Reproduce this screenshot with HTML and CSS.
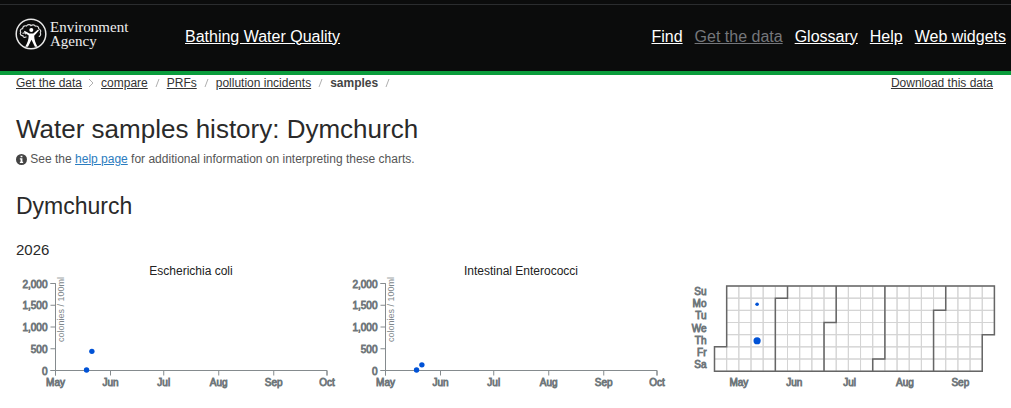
FILE: index.html
```
<!DOCTYPE html>
<html lang="en">
<head>
  <meta charset="UTF-8">
  <meta name="viewport" content="width=device-width, initial-scale=1.0">
  <title>Water samples history: Dymchurch</title>
  <link rel="stylesheet" href="styles.css">
</head>
<body>

  <header class="site-header">
    <a class="logo" href="#">
      <svg class="logo-mark" viewBox="0 0 32 32" aria-hidden="true">
        <circle cx="16" cy="16" r="14.8" fill="none" stroke="#e8e8e8" stroke-width="1.5"/>
        <!-- tree canopy -->
        <path d="M11 19c-1.500.8-3.200.2-3.200-1.400-2 .2-3.200-1.600-2.100-3.200-1-1.900.1-3.700 1.900-3.800.2-2.400 2.200-3.300 3.900-2.600C12.500 6.400 15 6 16 7.600c1.400-1.300 3.500-1 4.200.5 2-.5 3.700.8 3.500 2.600 2 .8 2.500 2.700 1.500 4.100.9 1.500.4 3-.9 3.600M8 15.300c1.200-.7 2.300-.3 2.800.6" fill="none" stroke="#ddd" stroke-width="1.200" stroke-linecap="round"/>
        <!-- figure -->
        <circle cx="16.300" cy="12" r="2" fill="#fff"/>
        <path d="M9.500 12.800l5 2.700h3.800l4.800-4 .9 1-4.800 5.200c0 3.500 1.300 7.500 3.300 11h-2.600l-3.400-7-3.500 7h-2.800c2.300-3.800 3.500-7.500 3.500-11.300l-4.700-3.400z" fill="#fff"/>
      </svg>
      <span class="logo-text">Environment<br>Agency</span>
    </a>
    <a class="service-name" href="#">Bathing Water Quality</a>
    <nav class="main-nav">
      <a href="#">Find</a>
      <a class="current" href="#">Get the data</a>
      <a href="#">Glossary</a>
      <a href="#">Help</a>
      <a href="#">Web widgets</a>
    </nav>
  </header>

  <main class="content">
    <div class="toolbar">
      <nav class="breadcrumb">
        <a href="#">Get the data</a>
        <svg class="sep" viewBox="0 0 7 10" aria-hidden="true"><path d="M1 1l4 4-4 4"/></svg>
        <a href="#">compare</a>
        <svg class="sep" viewBox="0 0 7 10" aria-hidden="true"><path d="M2 9l3-8"/></svg>
        <a href="#">PRFs</a>
        <svg class="sep" viewBox="0 0 7 10" aria-hidden="true"><path d="M2 9l3-8"/></svg>
        <a href="#">pollution incidents</a>
        <svg class="sep" viewBox="0 0 7 10" aria-hidden="true"><path d="M2 9l3-8"/></svg>
        <strong>samples</strong>
        <svg class="sep" viewBox="0 0 7 10" aria-hidden="true"><path d="M2 9l3-8"/></svg>
      </nav>
      <a class="download" href="#">Download this data</a>
    </div>

    <h1>Water samples history: Dymchurch</h1>
    <p class="hint">
      <svg class="info" viewBox="0 0 12 12" aria-hidden="true">
        <circle cx="6" cy="6" r="6" fill="#444"/>
        <path d="M5 1.800h2v1.700H5zM4.200 4.700H7v3.800h.8v1.300H4.200V8.500H5V6h-.8z" fill="#fff"/>
      </svg>
      See the <a href="#">help page</a> for additional information on interpreting these charts.
    </p>

    <h2>Dymchurch</h2>
    <h3>2026</h3>

    <div class="charts">
      <svg class="chart" id="ecoli" viewBox="0 0 330 140"></svg>
      <svg class="chart" id="entero" viewBox="0 0 330 140"></svg>
      <svg class="chart" id="calendar" viewBox="0 0 330 140"></svg>
    </div>
  </main>

  <script src="charts.js"></script>
</body>
</html>
```
FILE: styles.css
```
* {
  box-sizing: border-box;
}

body {
  margin: 0;
  background: #fff;
  color: #2a2a2a;
  font-family: "Liberation Sans", Arial, sans-serif;
  font-size: 12px;
  line-height: 16px;
}

/* Header */
.site-header {
  display: flex;
  align-items: center;
  height: 75px;
  padding: 0 5px 2px 15px;
  background: #0b0c0c;
  border-top: 4px solid #0b0c0c;
  border-bottom: 4px solid #0a9c3c;
  box-shadow: inset 0 1px 0 #2b2d2f;
}

.site-header a {
  color: #fff;
}

.site-header .logo {
  display: flex;
  align-items: center;
  gap: 3px;
  width: 170px;
  padding-bottom: 5px;
  color: #eee;
  text-decoration: none;
}

.logo-mark {
  width: 32px;
  height: 32px;
}

.logo-text {
  font-family: "Liberation Serif", "Times New Roman", serif;
  font-size: 15px;
  line-height: 14px;
}

.service-name,
.main-nav {
  font-size: 16px;
  line-height: 20px;
}

.main-nav {
  display: flex;
  gap: 12px;
  margin-left: auto;
}

.site-header .current {
  color: #75777b;
}

/* Page */
.content {
  padding: 0 5px 0 16px;
}

.toolbar {
  display: flex;
  justify-content: space-between;
  padding-right: 13px;
}

.breadcrumb {
  display: flex;
  align-items: center;
  gap: 6px;
}

.breadcrumb a,
.download {
  color: #333;
}

.breadcrumb strong {
  color: #444;
}

.sep {
  width: 7px;
  height: 10px;
  fill: none;
  stroke: #b0b0b0;
}

h1,
h2,
h3 {
  margin: 0;
  font-weight: normal;
}

h1 {
  margin-top: 22px;
  font-size: 26px;
  line-height: 32px;
}

.hint {
  margin: 6px 0 0;
  color: #555;
}

.hint a {
  color: #2b7cc0;
}

.info {
  width: 11px;
  height: 11px;
  vertical-align: -2px;
}

h2 {
  margin-top: 25px;
  font-size: 23px;
  line-height: 28px;
}

h3 {
  margin-top: 21px;
  font-size: 15px;
  line-height: 18px;
}

/* Charts */
.charts {
  display: grid;
  grid-template-columns: repeat(3, 1fr);
  margin-top: 1px;
}

.chart {
  display: block;
  width: 100%;
}

.chart-title {
  fill: #222;
  font-size: 12px;
  text-anchor: middle;
}

.label {
  fill: #6f777b;
  stroke: #6f777b;
  stroke-width: 0.8;
  font-size: 10px;
}

.middle {
  text-anchor: middle;
}

.end {
  text-anchor: end;
}

.unit {
  fill: #7f878b;
  font-size: 9px;
  text-anchor: end;
}

.axis {
  fill: none;
  stroke: #858b8e;
}

.sample {
  fill: #0052d6;
}

.day-grid {
  fill: none;
  stroke: #d4d4d4;
}

.month-line {
  fill: none;
  stroke: #666;
  stroke-width: 1.5;
}
```
FILE: charts.js
```
const SVG_NS = 'http://www.w3.org/2000/svg';

function add(parent, name, attrs, text) {
  const el = document.createElementNS(SVG_NS, name);
  for (const key in attrs) el.setAttribute(key, attrs[key]);
  if (text) el.textContent = text;
  parent.appendChild(el);
  return el;
}

// Scatter of sample counts over the season
function drawSamples(id, title, samples) {
  const svg = document.getElementById(id);
  const left = 39.5, right = 311, top = 23.5, bottom = 110.5;
  const x = day => left + day / 153 * (right - left);
  const y = count => bottom - count / 2000 * (bottom - top);

  add(svg, 'text', { class: 'chart-title', x: 175, y: 15 }, title);
  add(svg, 'path', { class: 'axis', d: `M${left - 5} ${top}H${left}V${bottom}H${left - 5}` });
  add(svg, 'path', { class: 'axis', d: `M${left} ${bottom + 5}V${bottom}H${right}V${bottom + 5}` });

  [0, 500, 1000, 1500, 2000].forEach(v => {
    add(svg, 'path', { class: 'axis', d: `M${left - 5} ${y(v)}h5` });
    add(svg, 'text', { class: 'label end', x: left - 8, y: y(v) + 4 }, v.toLocaleString('en-GB'));
  });

  const months = [['May', 0], ['Jun', 31], ['Jul', 61], ['Aug', 92], ['Sep', 123], ['Oct', 153]];
  months.forEach(([name, day]) => {
    add(svg, 'path', { class: 'axis', d: `M${x(day)} ${bottom}v5` });
    add(svg, 'text', { class: 'label middle', x: x(day), y: bottom + 15 }, name);
  });

  add(svg, 'text', { class: 'unit', transform: `translate(${left + 8} 17) rotate(-90)` }, 'colonies / 100ml');
  samples.forEach(([day, count]) => {
    add(svg, 'circle', { class: 'sample', cx: x(day), cy: y(count), r: 2.7 });
  });
}

// Calendar of the season, one column per week
function drawCalendar(id) {
  const svg = document.getElementById(id);
  const cell = 12.17, left = 38.5, top = 26;
  const x = col => left + col * cell;
  const y = row => top + row * cell;

  let grid = '';
  for (let col = 0; col < 23; col++) {
    for (let row = 0; row < 7; row++) {
      if ((col === 0 && row < 5) || (col === 22 && row > 3)) continue;
      grid += `M${x(col)} ${y(row)}h${cell}v${cell}h-${cell}z`;
    }
  }
  add(svg, 'path', { class: 'day-grid', d: grid });

  // outline, then the start of each month as [column, weekday]
  add(svg, 'path', {
    class: 'month-line',
    d: `M${x(0)} ${y(5)}H${x(1)}V${y(0)}H${x(23)}V${y(4)}H${x(22)}V${y(7)}H${x(0)}z`
  });
  [[5, 1], [9, 3], [13, 6], [18, 2]].forEach(([col, row]) => {
    add(svg, 'path', { class: 'month-line', d: `M${x(col)} ${y(7)}V${y(row)}H${x(col + 1)}V${y(0)}` });
  });

  ['Su', 'Mo', 'Tu', 'We', 'Th', 'Fr', 'Sa'].forEach((name, row) => {
    add(svg, 'text', { class: 'label end', x: left - 8, y: y(row) + 9 }, name);
  });
  ['May', 'Jun', 'Jul', 'Aug', 'Sep'].forEach((name, i) => {
    add(svg, 'text', { class: 'label middle', x: x(2 + i * 4.55), y: y(7) + 15 }, name);
  });

  add(svg, 'circle', { class: 'sample', cx: x(3.5), cy: y(1.5), r: 1.8 });
  add(svg, 'circle', { class: 'sample', cx: x(3.5), cy: y(4.5), r: 3.6 });
}

drawSamples('ecoli', 'Escherichia coli', [[17.5, 10], [20.5, 440]]);
drawSamples('entero', 'Intestinal Enterococci', [[17.5, 10], [20.5, 130]]);
drawCalendar('calendar');
```
